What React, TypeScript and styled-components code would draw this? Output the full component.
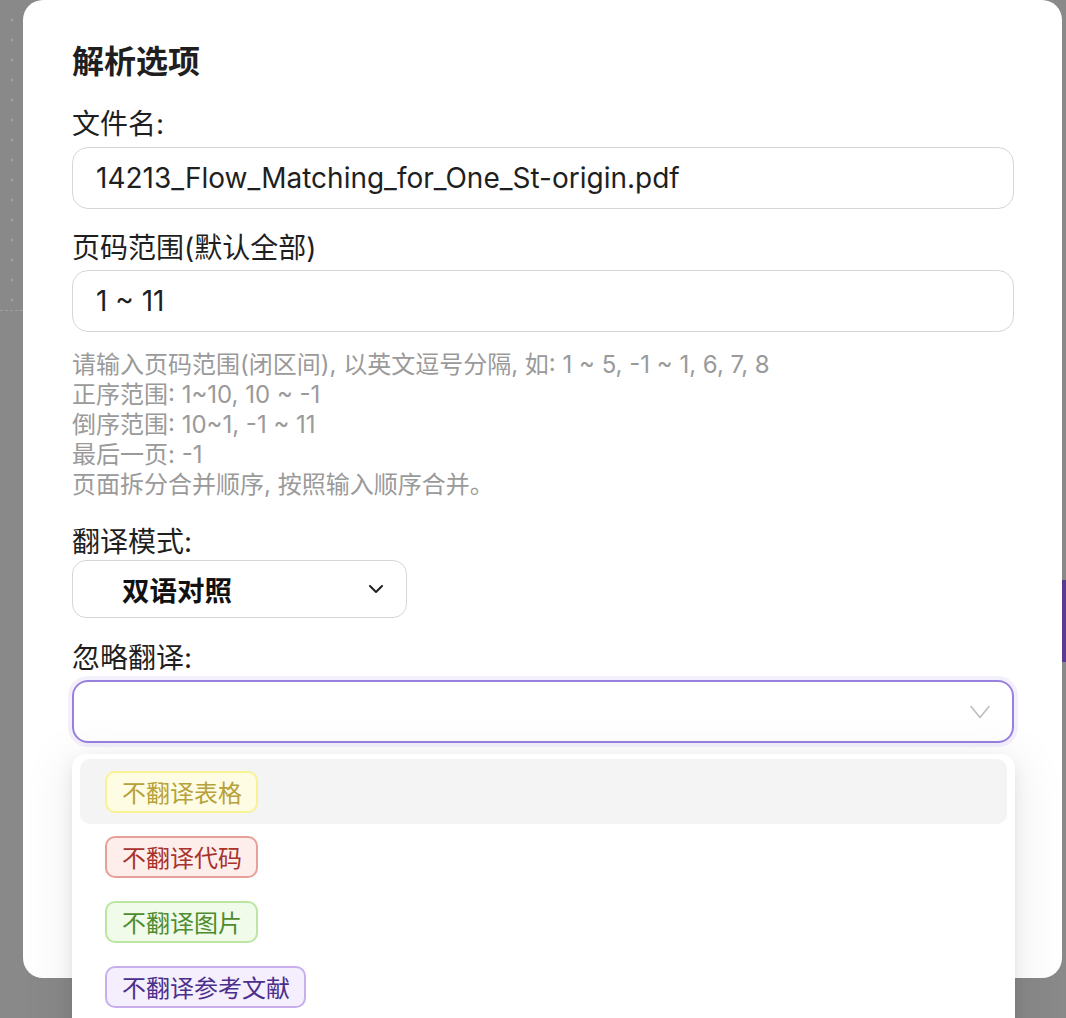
import React from 'react';
import styled, { createGlobalStyle } from 'styled-components';

const GlobalStyle = createGlobalStyle`
  html, body {
    margin: 0;
    padding: 0;
    background: #898989;
  }
  * {
    box-sizing: border-box;
  }
`;

const FONT = `-apple-system, Inter, "Noto Sans CJK SC", "Noto Sans", sans-serif`;

const Page = styled.div`
  position: relative;
  width: 1066px;
  height: 1018px;
  overflow: hidden;
  font-family: ${FONT};
`;

const BehindPage = styled.div`
  display: flex;
  height: 100%;
  background: #898989;
`;

const LeftRail = styled.div`
  width: 23px;
  display: flex;
  flex-direction: column;
  align-items: center;
`;

const DottedLine = styled.div`
  width: 4px;
  height: 300px;
  margin-top: 10px;
  background-image: radial-gradient(circle, #a3a3a3 1.2px, transparent 1.6px);
  background-size: 4px 20px;
`;

const DashedLine = styled.div`
  width: 100%;
  border-top: 1px dashed #a0a0a0;
`;

const RightRail = styled.div`
  margin-left: auto;
  width: 4px;
  display: flex;
  flex-direction: column;
`;

const PurpleBlock = styled.div`
  margin-top: 580px;
  height: 82px;
  background: #5b3a93;
`;

const Overlay = styled.div`
  position: absolute;
  inset: 0;
  display: flex;
  align-items: flex-start;
  padding-left: 23px;
`;

const Modal = styled.div`
  position: relative;
  width: 1039px;
  height: 978px;
  background: #fff;
  border-radius: 20px;
  padding: 40px 48px 0 49px;
  display: flex;
  flex-direction: column;
`;

const Title = styled.div`
  font-size: 32px;
  font-weight: 700;
  color: #1f1f1f;
  line-height: 44px;
`;

const Label = styled.div<{ top: number; gap: number }>`
  font-size: 28px;
  color: #1f1f1f;
  line-height: 36px;
  margin-top: ${p => p.top}px;
  margin-bottom: ${p => p.gap}px;
`;

const TextBox = styled.div`
  height: 62px;
  border: 1.5px solid #d6d6d6;
  border-radius: 16px;
  padding: 0 23px;
  display: flex;
  align-items: center;
  font-size: 28px;
  color: #1f1f1f;
`;

const Help = styled.div`
  margin-top: 18px;
  font-size: 24px;
  line-height: 30px;
  color: #9a9a9a;
`;

const ModeSelect = styled.div`
  width: 335px;
  height: 58px;
  border: 1.5px solid #d6d6d6;
  border-radius: 14px;
  display: flex;
  align-items: center;
  padding: 0 22px 0 49px;
  font-size: 27.5px;
  font-weight: 700;
  color: #111;
  justify-content: space-between;
`;

const MultiWrap = styled.div`
  position: relative;
`;

const MultiSelect = styled.div`
  height: 63px;
  border: 2px solid #9a80de;
  border-radius: 16px;
  box-shadow: 0 0 0 4px rgba(154, 128, 222, 0.12);
  display: flex;
  align-items: center;
  justify-content: flex-end;
  padding-right: 22px;
`;

const Dropdown = styled.div`
  position: absolute;
  left: 0;
  right: -1px;
  top: 74px;
  height: 300px;
  background: #fff;
  border-radius: 14px;
  padding: 5px 8px;
  box-shadow: 0 6px 16px rgba(0, 0, 0, 0.08), 0 9px 48px 10px rgba(0, 0, 0, 0.06),
    0 3px 6px -4px rgba(0, 0, 0, 0.12);
  display: flex;
  flex-direction: column;
`;

const Option = styled.div<{ active?: boolean }>`
  height: 65px;
  border-radius: 10px;
  background: ${p => (p.active ? '#f4f4f4' : 'transparent')};
  display: flex;
  align-items: center;
  padding-left: 25px;
`;

const Tag = styled.span<{ bg: string; bd: string; fg: string }>`
  height: 42px;
  display: inline-flex;
  align-items: center;
  padding: 0 14px 0 15px;
  border-radius: 10px;
  border: 2px solid ${p => p.bd};
  background: ${p => p.bg};
  color: ${p => p.fg};
  font-size: 24px;
`;

const options = [
  { text: '不翻译表格', bg: '#fefde3', bd: '#f7f292', fg: '#b7a13a', active: true },
  { text: '不翻译代码', bg: '#fdeeec', bd: '#e5a098', fg: '#a8322c' },
  { text: '不翻译图片', bg: '#f0fbea', bd: '#bde5a2', fg: '#4e8c31' },
  { text: '不翻译参考文献', bg: '#f4eefd', bd: '#c9aeee', fg: '#4b2f8c' },
];

const App = (): JSX.Element => {
  return (
    <>
      <GlobalStyle />
      <Page>
        <BehindPage>
          <LeftRail>
            <DottedLine />
            <DashedLine />
          </LeftRail>
          <RightRail>
            <PurpleBlock />
          </RightRail>
        </BehindPage>
        <Overlay>
          <Modal>
            <Title>解析选项</Title>
            <Label top={22} gap={5}>文件名:</Label>
            <TextBox>14213_Flow_Matching_for_One_St-origin.pdf</TextBox>
            <Label top={21} gap={4}>页码范围(默认全部)</Label>
            <TextBox>1 ~ 11</TextBox>
            <Help>
              请输入页码范围(闭区间), 以英文逗号分隔, 如: 1 ~ 5, -1 ~ 1, 6, 7, 8
              <br />
              正序范围: 1~10, 10 ~ -1
              <br />
              倒序范围: 10~1, -1 ~ 11
              <br />
              最后一页: -1
              <br />
              页面拆分合并顺序, 按照输入顺序合并。
            </Help>
            <Label top={24} gap={0}>翻译模式:</Label>
            <ModeSelect>
              <span>双语对照</span>
              <svg width="16" height="10" viewBox="0 0 16 10">
                <path d="M2 2l6 6 6-6" fill="none" stroke="#222" strokeWidth="2" strokeLinecap="round" strokeLinejoin="round" />
              </svg>
            </ModeSelect>
            <Label top={22} gap={4}>忽略翻译:</Label>
            <MultiWrap>
              <MultiSelect>
                <svg width="20" height="14" viewBox="0 0 20 14">
                  <path d="M1 1.5l9 11 9-11" fill="none" stroke="#bdbdbd" strokeWidth="1.6" strokeLinecap="round" strokeLinejoin="round" />
                </svg>
              </MultiSelect>
              <Dropdown>
                {options.map(o => (
                  <Option key={o.text} active={o.active}>
                    <Tag bg={o.bg} bd={o.bd} fg={o.fg}>
                      {o.text}
                    </Tag>
                  </Option>
                ))}
              </Dropdown>
            </MultiWrap>
          </Modal>
        </Overlay>
      </Page>
    </>
  );
};

export default App;
